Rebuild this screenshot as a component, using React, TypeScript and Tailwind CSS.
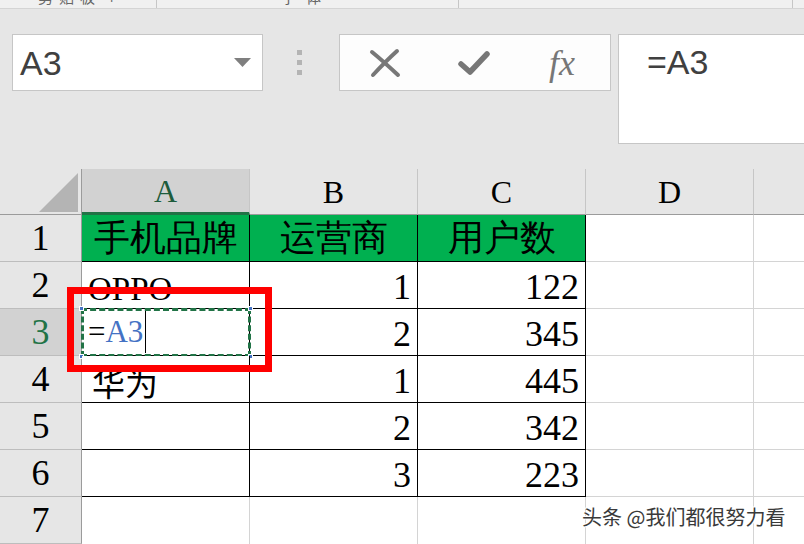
const rows = [
  { n: 1, a: "手机品牌", b: "运营商", c: "用户数", head: true },
  { n: 2, a: "OPPO", b: "1", c: "122" },
  { n: 3, a: "", b: "2", c: "345", active: true },
  { n: 4, a: "华为", b: "1", c: "445" },
  { n: 5, a: "", b: "2", c: "342" },
  { n: 6, a: "", b: "3", c: "223" },
  { n: 7, a: "", b: "", c: "", blank: true },
];

const Handle = ({ className }: { className: string }) => (
  <span className={`absolute w-[5px] h-[5px] bg-[#4472c4] border border-white ${className}`} />
);

const FormulaBar = () => (
  <div className="flex items-start pt-[25px] pl-[12px] font-['Liberation_Sans',sans-serif]">
    {/* Name box */}
    <div className="w-[251px] h-[57px] bg-white border border-[#c6c6c6] flex items-center justify-between pl-[7px] pr-[11px]">
      <span className="text-[34px] text-[#404040] leading-none">A3</span>
      <svg width="17" height="9" viewBox="0 0 17 9">
        <path d="M0 0h17L8.5 9z" fill="#7f7f7f" />
      </svg>
    </div>

    {/* grip dots */}
    <div className="w-[76px] h-[57px] flex flex-col items-center justify-center gap-[5px] pr-[4px]">
      <span className="w-[5px] h-[5px] bg-[#b4b4b4]" />
      <span className="w-[5px] h-[5px] bg-[#b4b4b4]" />
      <span className="w-[5px] h-[5px] bg-[#b4b4b4]" />
    </div>

    {/* cancel / enter / fx */}
    <div className="w-[272px] h-[57px] bg-[#fdfdfd] border border-[#c6c6c6] flex items-center">
      <div className="w-[90px] flex justify-center">
        <svg width="32" height="30" viewBox="0 0 32 30">
          <path d="M3 4 Q14 13 29 27 M28 3 Q17 13 4 27" stroke="#777" strokeWidth="4" strokeLinecap="round" fill="none" />
        </svg>
      </div>
      <div className="w-[88px] flex justify-center">
        <svg width="32" height="26" viewBox="0 0 32 26">
          <path d="M3 14 L12 22 L29 4" stroke="#777" strokeWidth="5.5" strokeLinecap="round" strokeLinejoin="round" fill="none" />
        </svg>
      </div>
      <div className="flex-1 flex justify-center pr-[4px]">
        <span className="font-['Liberation_Serif',serif] italic text-[36px] text-[#777] leading-none">fx</span>
      </div>
    </div>

    {/* formula input */}
    <div className="ml-[7px] flex-1 h-[110px] bg-white border border-[#c6c6c6] border-r-0 pl-[28px] pt-[10px]">
      <span className="text-[34px] text-[#404040] leading-none">=A3</span>
    </div>
  </div>
);

const Grid = () => (
  <div className="mt-[25px] grid grid-cols-[82px_168px_168px_168px_168px_1fr] font-['Liberation_Serif',serif]">
    {/* header row */}
    <div className="h-[46px] bg-[#e6e6e6] border-r border-b border-[#9b9b9b] flex items-end justify-end pr-[3px] pb-[2px]">
      <svg width="39" height="39" viewBox="0 0 39 39">
        <path d="M39 0V39H0z" fill="#b4b4b4" />
      </svg>
    </div>
    <div className="h-[46px] bg-[#d2d2d2] border-r border-[#c6c6c6] border-b-[3px] border-b-[#217346] flex items-center justify-center text-[32px] text-[#1d5c3c]">
      A
    </div>
    {["B", "C", "D"].map((l) => (
      <div key={l} className="h-[46px] bg-[#e6e6e6] border-r border-[#c6c6c6] border-b border-b-[#9b9b9b] flex items-center justify-center text-[32px] text-black">
        {l}
      </div>
    ))}
    <div className="h-[46px] bg-[#e6e6e6] border-b border-[#9b9b9b]" />

    {rows.map((r) => (
      <div key={r.n} className="contents">
        <div
          className={`h-[47px] border-r border-[#9b9b9b] border-b border-b-[#bdbdbd] flex items-center justify-center text-[36px] ${
            r.active ? "bg-[#d2d2d2] text-[#217346]" : "bg-[#e6e6e6] text-black"
          }`}
        >
          {r.n}
        </div>

        {/* column A */}
        <div
          className={`relative h-[47px] border-r flex ${
            r.blank ? "bg-white border-[#d4d4d4]" : "border-b border-black"
          } ${r.head ? "bg-[#00b050] justify-center items-center text-[36px]" : "bg-white pl-[6px] items-end pb-[2px] text-[33px]"} leading-none text-black`}
        >
          {r.active ? (
            <>
              <span className="self-center text-[31px] leading-none flex items-center">
                <span className="text-black">=</span>
                <span className="text-[#4472c4]">A3</span>
                <span className="ml-[2px] w-px h-[43px] bg-black" />
              </span>
              <span className="absolute -top-px -left-px right-[-2px] bottom-[-2px] border-[3px] border-dashed border-[#217346]" />
              <Handle className="-top-[3px] -left-[3px]" />
              <Handle className="-top-[3px] -right-[4px]" />
              <Handle className="-bottom-[4px] -left-[3px]" />
              <Handle className="-bottom-[4px] -right-[4px]" />
            </>
          ) : (
            <span className={r.n === 4 ? "pl-[4px] pb-[1px] font-['Noto_Sans_CJK_SC',serif]" : ""}>{r.a}</span>
          )}
        </div>

        {/* columns B and C */}
        {[r.b, r.c].map((v, i) => (
          <div
            key={i}
            className={`h-[47px] border-r flex text-[36px] leading-none text-black ${
              r.blank ? "bg-white border-[#d4d4d4]" : "border-b border-black"
            } ${r.head ? "bg-[#00b050] justify-center items-center" : "bg-white justify-end items-end pb-[3px] pr-[6px]"}`}
          >
            {v}
          </div>
        ))}

        <div className={`h-[47px] bg-white border-r border-[#d4d4d4] ${r.blank ? "" : "border-b"}`} />
        <div className={`h-[47px] bg-white border-[#d4d4d4] ${r.blank ? "" : "border-b"}`} />
      </div>
    ))}
  </div>
);

export default function App() {
  return (
    <div className="relative w-[804px] h-[544px] overflow-hidden bg-[#e6e6e6]">
      {/* ribbon remnant */}
      <div className="h-[9px] bg-[#f0f0f0] border-b border-[#d4d4d4] flex overflow-hidden font-['Noto_Sans_CJK_SC',sans-serif] text-[15px] text-[#666]">
        <div className="w-[157px] border-r border-[#c6c6c6] -mt-[14px] pl-[38px] tracking-[6px]">剪贴板 ⌐</div>
        <div className="w-[302px] border-r border-[#c6c6c6] -mt-[14px] pl-[124px] tracking-[10px]">字体</div>
        <div className="w-[334px] border-r border-[#c6c6c6]" />
      </div>

      <FormulaBar />
      <Grid />

      {/* red highlight */}
      <div className="absolute left-[67px] top-[287px] w-[205px] h-[85px] border-[7px] border-[#ff0000]" />

      {/* watermark */}
      <div className="absolute left-[582px] top-[502px] text-[20px] text-[#3a3a3a] font-['Noto_Sans_CJK_SC',sans-serif] [text-shadow:1px_1px_0_#fff,-1px_-1px_0_#fff]">
        头条 @我们都很努力看
      </div>
    </div>
  );
}
